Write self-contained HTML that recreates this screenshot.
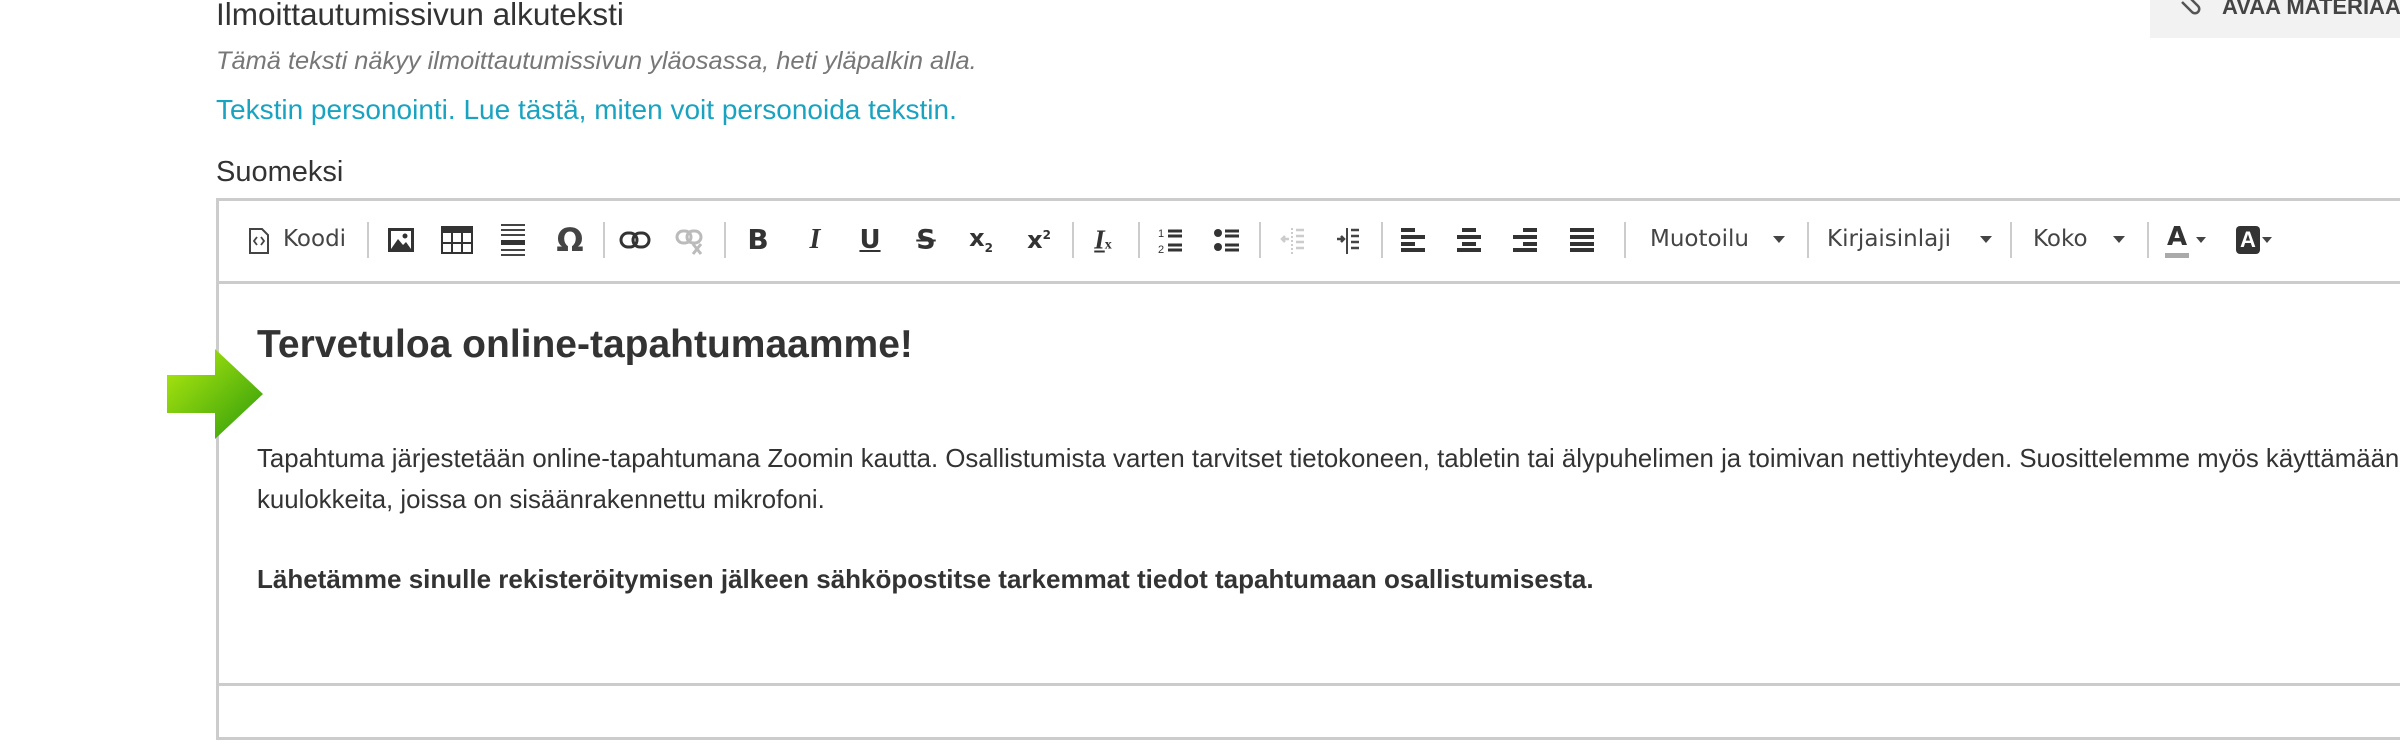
<!DOCTYPE html>
<html><head><meta charset="utf-8"><style>
*{margin:0;padding:0;box-sizing:border-box}
body{width:2400px;height:750px;background:#fff;position:relative;overflow:hidden;font-family:"Liberation Sans",sans-serif;color:#333}
.a{position:absolute;white-space:nowrap}
.sep{position:absolute;top:222px;width:2px;height:36px;background:#ccc}
.tb{position:absolute;top:240px;transform:translate(-50%,-50%);font-family:"DejaVu Sans",sans-serif;color:#444;font-size:24px;line-height:1}
.lbl{position:absolute;top:226px;font-family:"DejaVu Sans",sans-serif;color:#444;font-size:23px}
.car{position:absolute;top:236px;width:0;height:0;border-left:6px solid transparent;border-right:6px solid transparent;border-top:7px solid #444}
</style></head><body>
<div class="a" style="left:216px;top:-4px;font-size:31.5px;color:#333">Ilmoittautumissivun alkuteksti</div>
<div class="a" style="left:216px;top:47px;font-size:25.4px;font-style:italic;color:#777">Tämä teksti näkyy ilmoittautumissivun yläosassa, heti yläpalkin alla.</div>
<div class="a" style="left:216px;top:94px;font-size:28px;color:#1aa3c0">Tekstin personointi. Lue tästä, miten voit personoida tekstin.</div>
<div class="a" style="left:216px;top:156px;font-size:29px;color:#333">Suomeksi</div>

<div class="a" style="left:2150px;top:0;width:260px;height:38px;background:#f2f2f2"></div>
<svg class="a" style="left:2178px;top:0" width="26" height="20" viewBox="0 0 26 20"><path d="M4 2 L14 12 a4 4 0 0 0 6-6 L10 -4" fill="none" stroke="#555" stroke-width="2.5"/></svg>
<div class="a" style="left:2222px;top:-6px;font-size:22px;font-weight:bold;color:#444">AVAA MATERIAA</div>

<div class="a" style="left:216px;top:198px;width:2300px;height:542px;border:3px solid #ccc"></div>
<div class="a" style="left:216px;top:281px;width:2300px;height:3px;background:#ccc"></div>
<div class="a" style="left:216px;top:683px;width:2300px;height:3px;background:#ccc"></div>

<!-- toolbar -->
<svg class="a" style="left:248px;top:227px" width="22" height="28" viewBox="0 0 22 28"><path d="M2 2h12l6 6v18H2z" fill="none" stroke="#444" stroke-width="2"/><path d="M9 10l-3 4 3 4M13 10l3 4-3 4" fill="none" stroke="#444" stroke-width="1.8"/></svg>
<div class="lbl" style="left:283px">Koodi</div>
<div class="sep" style="left:367px"></div>
<svg class="a" style="left:387px;top:227px" width="28" height="26" viewBox="0 0 28 26"><rect x="1" y="1" width="26" height="24" fill="#333"/><rect x="4" y="4" width="20" height="18" fill="#fff"/><path d="M4 22l7-10 5 6 3-3 5 7z" fill="#333"/><circle cx="18" cy="9" r="2.5" fill="#333"/></svg>
<svg class="a" style="left:441px;top:226px" width="32" height="28" viewBox="0 0 32 28"><rect x="1" y="1" width="30" height="26" fill="none" stroke="#333" stroke-width="2"/><rect x="1" y="1" width="30" height="6" fill="#333"/><path d="M11 7v20M21 7v20M1 17h30" stroke="#333" stroke-width="2"/></svg>
<svg class="a" style="left:499px;top:223px" width="28" height="34" viewBox="0 0 28 34"><path d="M2 2h24M2 7h24M2 12h24M2 27h24M2 32h24" stroke="#444" stroke-width="2"/><rect x="2" y="17" width="24" height="5" fill="#333"/></svg>
<div class="tb" style="left:570px;font-size:32px;font-weight:bold">Ω</div>
<div class="sep" style="left:603px"></div>
<svg class="a" style="left:619px;top:230px" width="32" height="20" viewBox="0 0 32 20"><rect x="2" y="3" width="16" height="14" rx="7" fill="none" stroke="#333" stroke-width="3"/><rect x="14" y="3" width="16" height="14" rx="7" fill="none" stroke="#333" stroke-width="3"/></svg>
<svg class="a" style="left:675px;top:228px" width="32" height="28" viewBox="0 0 32 28"><rect x="2" y="3" width="14" height="12" rx="6" fill="none" stroke="#bbb" stroke-width="3"/><rect x="12" y="3" width="14" height="12" rx="6" fill="none" stroke="#bbb" stroke-width="3"/><path d="M18 16l8 10M26 16l-8 10" stroke="#bbb" stroke-width="3"/></svg>
<div class="sep" style="left:724px"></div>
<div class="tb" style="left:758px;font-weight:bold;font-size:28px;color:#333">B</div>
<div class="tb" style="left:815px;font-weight:bold;font-style:italic;font-size:28px;font-family:'Liberation Serif',serif;color:#333">I</div>
<div class="tb" style="left:870px;font-weight:bold;font-size:26px;text-decoration:underline;color:#333">U</div>
<div class="tb" style="left:926px;font-weight:bold;font-size:27px;text-decoration:line-through;color:#333">S</div>
<div class="tb" style="left:981px;font-weight:bold;font-size:24px;color:#333">x<sub style="font-size:12px">2</sub></div>
<div class="tb" style="left:1039px;font-weight:bold;font-size:24px;color:#333">x<sup style="font-size:12px">2</sup></div>
<div class="sep" style="left:1072px"></div>
<div class="tb" style="left:1103px;font-weight:bold;font-style:italic;font-size:27px;font-family:'Liberation Serif',serif;color:#333"><u>I</u><span style="font-size:14px;font-style:normal">x</span></div>
<div class="sep" style="left:1138px"></div>
<svg class="a" style="left:1158px;top:226px" width="26" height="28" viewBox="0 0 26 28"><path d="M10 5h14M10 10h14M10 19h14M10 24h14" stroke="#333" stroke-width="3"/><text x="0" y="11" font-size="11" fill="#333" font-family="Liberation Sans">1</text><text x="0" y="27" font-size="11" fill="#333" font-family="Liberation Sans">2</text></svg>
<svg class="a" style="left:1213px;top:226px" width="28" height="28" viewBox="0 0 28 28"><circle cx="5" cy="7" r="4" fill="#333"/><circle cx="5" cy="21" r="4" fill="#333"/><path d="M12 5h14M12 10h14M12 19h14M12 24h14" stroke="#333" stroke-width="3"/></svg>
<div class="sep" style="left:1259px"></div>
<svg class="a" style="left:1280px;top:226px" width="26" height="28" viewBox="0 0 26 28"><path d="M12 2v26" stroke="#ccc" stroke-width="2" stroke-dasharray="2 2"/><path d="M16 4h8M16 10h8M16 16h8M16 22h8M9 13H2M5 10l-3 3 3 3" stroke="#ccc" stroke-width="2.5" fill="none"/></svg>
<svg class="a" style="left:1335px;top:226px" width="26" height="28" viewBox="0 0 26 28"><path d="M12 2v26" stroke="#444" stroke-width="2"/><path d="M16 4h8M16 10h8M16 16h8M16 22h8M2 13h7M6 10l3 3-3 3" stroke="#444" stroke-width="2.5" fill="none"/></svg>
<div class="sep" style="left:1381px"></div>
<svg class="a" style="left:1400px;top:228px" width="26" height="24" viewBox="0 0 26 24"><path d="M1 2h14M1 9h24M1 16h14M1 22h24" stroke="#333" stroke-width="4"/></svg>
<svg class="a" style="left:1456px;top:228px" width="26" height="24" viewBox="0 0 26 24"><path d="M6 2h14M1 9h24M6 16h14M1 22h24" stroke="#333" stroke-width="4"/></svg>
<svg class="a" style="left:1512px;top:228px" width="26" height="24" viewBox="0 0 26 24"><path d="M11 2h14M1 9h24M11 16h14M1 22h24" stroke="#333" stroke-width="4"/></svg>
<svg class="a" style="left:1569px;top:228px" width="26" height="24" viewBox="0 0 26 24"><path d="M1 2h24M1 9h24M1 16h24M1 22h24" stroke="#333" stroke-width="4"/></svg>
<div class="sep" style="left:1624px"></div>
<div class="lbl" style="left:1650px">Muotoilu</div><div class="car" style="left:1773px"></div>
<div class="sep" style="left:1807px"></div>
<div class="lbl" style="left:1827px">Kirjaisinlaji</div><div class="car" style="left:1980px"></div>
<div class="sep" style="left:2010px"></div>
<div class="lbl" style="left:2033px">Koko</div><div class="car" style="left:2113px"></div>
<div class="sep" style="left:2147px"></div>
<div class="tb" style="left:2177px;top:237px;font-weight:bold;font-size:26px;color:#333">A</div>
<div class="a" style="left:2165px;top:253px;width:24px;height:5px;background:#aaa"></div>
<div class="car" style="left:2196px;top:237px;border-left-width:5px;border-right-width:5px;border-top-width:6px"></div>
<div class="a" style="left:2236px;top:226px;width:24px;height:28px;background:#333;border-radius:4px;color:#fff;font-weight:bold;font-size:22px;text-align:center;line-height:28px">A</div>
<div class="car" style="left:2262px;top:237px;border-left-width:5px;border-right-width:5px;border-top-width:6px"></div>

<!-- content -->
<svg class="a" style="left:165px;top:347px" width="100" height="94" viewBox="0 0 100 94"><defs><linearGradient id="g" x1="0" y1="0" x2="1" y2="1"><stop offset="0" stop-color="#b6ec10"/><stop offset="1" stop-color="#2b9a0a"/></linearGradient></defs><path d="M2 28h48V2l48 45-48 45V66H2z" fill="url(#g)"/></svg>
<div class="a" style="left:257px;top:323px;font-size:39px;font-weight:bold;color:#333">Tervetuloa online-tapahtumaamme!</div>
<div class="a" style="left:257px;top:439px;font-size:25.8px;line-height:41px;color:#333">Tapahtuma järjestetään online-tapahtumana Zoomin kautta. Osallistumista varten tarvitset tietokoneen, tabletin tai älypuhelimen ja toimivan nettiyhteyden. Suosittelemme myös käyttämään<br>kuulokkeita, joissa on sisäänrakennettu mikrofoni.</div>
<div class="a" style="left:257px;top:564px;font-size:26px;font-weight:bold;color:#333">Lähetämme sinulle rekisteröitymisen jälkeen sähköpostitse tarkemmat tiedot tapahtumaan osallistumisesta.</div>
</body></html>
